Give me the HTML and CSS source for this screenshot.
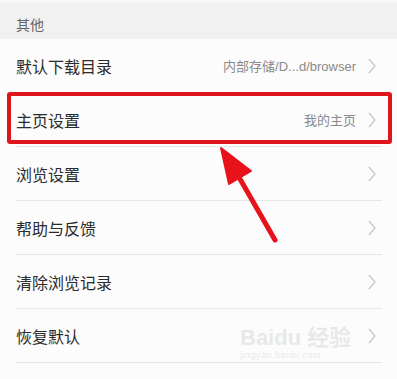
FILE: index.html
```html
<!DOCTYPE html>
<html lang="zh">
<head>
<meta charset="utf-8">
<link rel="stylesheet" href="styles.css">
</head>
<body>
<div class="page">
  <div class="topstrip"></div>
  <div class="section-head">其他</div>
  <ul class="list">
    <li class="row"><span class="title">默认下载目录</span><span class="value">内部存储/D...d/browser</span><svg class="chev" viewBox="0 0 8 16"><polyline points="1,1 7,8 1,15"/></svg></li>
    <li class="row highlight"><span class="title">主页设置</span><span class="value">我的主页</span><svg class="chev" viewBox="0 0 8 16"><polyline points="1,1 7,8 1,15"/></svg></li>
    <li class="row"><span class="title">浏览设置</span><span class="value"></span><svg class="chev" viewBox="0 0 8 16"><polyline points="1,1 7,8 1,15"/></svg></li>
    <li class="row"><span class="title">帮助与反馈</span><span class="value"></span><svg class="chev" viewBox="0 0 8 16"><polyline points="1,1 7,8 1,15"/></svg></li>
    <li class="row"><span class="title">清除浏览记录</span><span class="value"></span><svg class="chev" viewBox="0 0 8 16"><polyline points="1,1 7,8 1,15"/></svg></li>
    <li class="row"><span class="title">恢复默认</span><span class="value"></span><svg class="chev" viewBox="0 0 8 16"><polyline points="1,1 7,8 1,15"/></svg></li>
  </ul>
  <svg class="arrow" viewBox="0 0 397 379" width="397" height="379">
    <line x1="275" y1="240" x2="236" y2="172" />
    <polygon points="221,148 229,184 251,171" />
  </svg>
  <div class="watermark">
    <div class="wm-main">Bai<span class="paw">du</span> 经验</div>
    <div class="wm-sub">jingyan.baidu.com</div>
  </div>
</div>
</body>
</html>
```
FILE: styles.css
```css
* { box-sizing: border-box; }
html, body {
  margin: 0;
  padding: 0;
  background: #fcfcfc;
}
.page {
  position: relative;
  width: 397px;
  height: 379px;
  overflow: hidden;
  font-family: "Noto Sans CJK SC", "Noto Sans", sans-serif;
  background: #fcfcfc;
}
.topstrip {
  height: 3px;
  background: #f8f8f8;
}
.section-head {
  height: 36px;
  background: #f1f1f1;
  color: #666;
  font-size: 14px;
  line-height: 30px;
  padding-top: 6px;
  padding-left: 16px;
}
.list {
  list-style: none;
  margin: 0;
  padding: 0;
}
.row {
  position: relative;
  height: 54px;
  display: flex;
  align-items: center;
  margin: 0 15px 0 16px;
  border-bottom: 1px solid #e6e6e6;
}
.title {
  font-size: 16px;
  color: #2b2b2b;
  flex: 1;
}
.value {
  font-size: 13px;
  color: #8a8a8a;
  margin-right: 12px;
  font-family: "Liberation Sans", "Noto Sans CJK SC", sans-serif;
}
.chev {
  width: 8px;
  height: 16px;
  margin-right: 6px;
}
.chev polyline {
  fill: none;
  stroke: #c4c4c4;
  stroke-width: 1.2;
}
.highlight::after {
  content: "";
  position: absolute;
  left: -9px;
  right: -10px;
  top: -1px;
  bottom: 2px;
  border: 4px solid #e0141c;
  border-radius: 3px;
}
.arrow {
  position: absolute;
  left: 0;
  top: 0;
}
.arrow line {
  stroke: #e8121a;
  stroke-width: 5;
  stroke-linecap: round;
}
.arrow polygon {
  fill: #e8121a;
  stroke: #e8121a;
  stroke-width: 2;
  stroke-linejoin: round;
}
.watermark {
  position: absolute;
  left: 240px;
  top: 327px;
  color: rgba(200, 200, 200, 0.4);
  font-family: "Liberation Sans", "Noto Sans CJK SC", sans-serif;
}
.wm-main {
  font-size: 22px;
  font-weight: bold;
  line-height: 22px;
}
.wm-sub {
  font-size: 9px;
  line-height: 12px;
  letter-spacing: 0.5px;
}
```
